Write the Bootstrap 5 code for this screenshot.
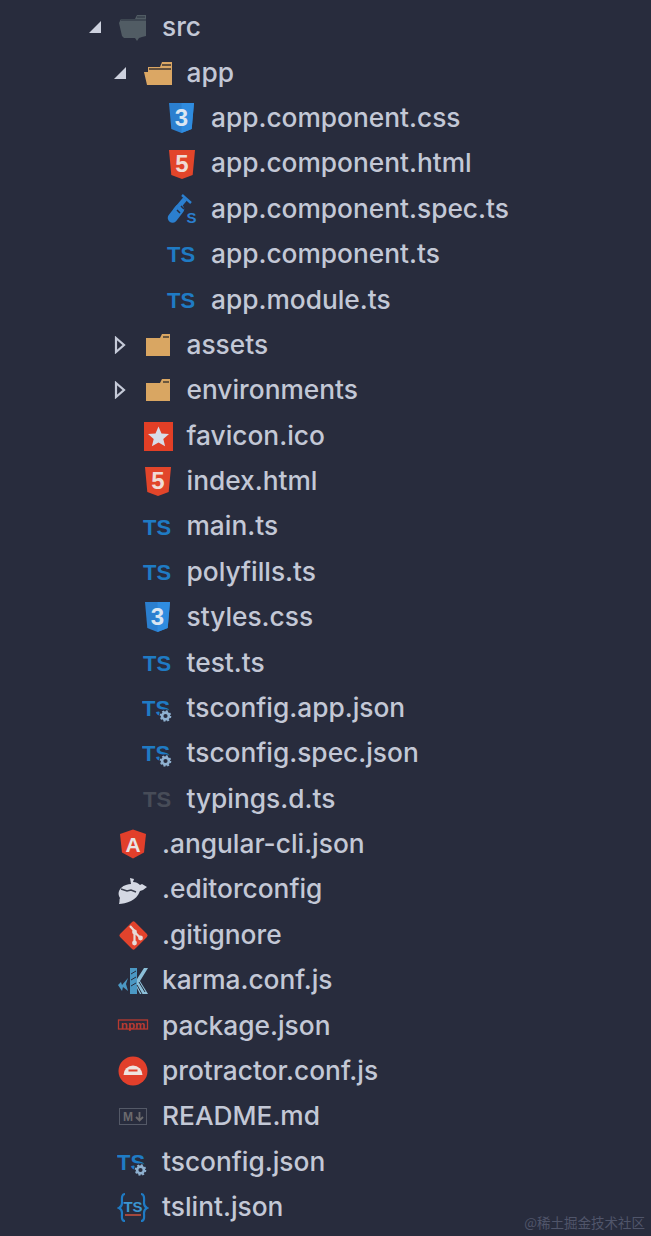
<!DOCTYPE html>
<html lang="en">

<head>
  <meta charset="UTF-8" />
  <meta name="viewport" content="width=device-width, initial-scale=1.0" />
  <title>File tree</title>

  <link href="https://cdn.jsdelivr.net/npm/bootstrap@5.3.0/dist/css/bootstrap.min.css" rel="stylesheet">
  <style>
    html, body {
      height: 100%;
    }

    body {
      background: #282c3d;
      color: #c3c8d6;
      font-family: Inter, "Liberation Sans", "Noto Sans CJK SC", sans-serif;
      overflow: hidden;
    }

    .tree-wrap {
      padding-top: 4.8px;
    }

    .tree-row {
      height: 45.385px;
      font-size: 26.3px;
      font-weight: 500;
      line-height: 1;
      white-space: nowrap;
    }

    .lvl-0 { padding-left: 88px; }
    .lvl-1 { padding-left: 112.5px; }
    .lvl-2 { padding-left: 137px; }

    .arrow-slot {
      width: 29px;
      flex: none;
    }

    .file-icon {
      width: 32px;
      height: 32px;
      flex: none;
      margin-right: 13px;
    }

    symbol text {
      font-family: "Liberation Sans", sans-serif;
      font-weight: 700;
    }

    .water-mark {
      position: absolute;
      right: 6px;
      bottom: 5px;
      font-size: 13.5px;
      line-height: 18px;
      color: #50556a;
      font-family: "Noto Sans CJK SC", sans-serif;
    }
  </style>
</head>

<body class="position-relative">
  <svg width="0" height="0" class="position-absolute">
    <defs>
      <symbol id="i-open" viewBox="0 0 14 14"><path d="M13 1v12H1z" fill="#cdd1de"/></symbol>
      <symbol id="i-closed" viewBox="0 0 14 18"><path d="M3 2l8 7-8 7z" fill="none" stroke="#c5cad8" stroke-width="2.2"/></symbol>

      <symbol id="i-src" viewBox="0 0 32 32"><path d="M4 8h14l2-4h9v21l-4 1-3 1-2 3-2-3H7l-2-2-3-13z" fill="#515c64"/><path d="M4 9h25M20 6h8" stroke="#2b303f" stroke-width="1.200"/></symbol>
      <symbol id="i-app" viewBox="0 0 32 32"><path d="M6 10h12l2-5h10v23H5L2 15h4z" fill="#dba764"/><path d="M7 12h22M20 8h9" stroke="#3c3530" stroke-width="1.400"/></symbol>
      <symbol id="i-folder" viewBox="0 0 32 32"><path d="M4 9h14l2-4h8v22H4z" fill="#d9a662"/><path d="M21 8h6" stroke="#3c3530" stroke-width="1.400"/></symbol>

      <symbol id="i-css" viewBox="0 0 32 32"><path d="M3 1h25l-2.300 26L15.500 31 5.300 27z" fill="#2b7fcf"/><path d="M15.500 1h12.500l-2.300 26-10.200 4z" fill="#2f8ce0"/><text x="15.500" y="24" font-size="24" text-anchor="middle" fill="#dbe6f2">3</text></symbol>
      <symbol id="i-html" viewBox="0 0 32 32"><path d="M3 2h26l-2.300 25L16 31 5.300 27z" fill="#e2452a"/><text x="16" y="24" font-size="24" text-anchor="middle" fill="#f0dcd6">5</text></symbol>
      <symbol id="i-spec" viewBox="0 0 32 32"><path d="M16 2l9 8" stroke="#2b7fcf" stroke-width="2.400"/><path d="M19 6L9 18" stroke="#2b7fcf" stroke-width="5"/><path d="M6.500 25l7-9" stroke="#2b7fcf" stroke-width="9.500" stroke-linecap="round"/><path d="M11 17l3 3M15 13l3 3" stroke="#282c3d" stroke-width="1.500"/><text x="25.500" y="30" font-size="15" text-anchor="middle" fill="#2b7fcf">S</text></symbol>
      <symbol id="i-ts" viewBox="0 0 32 32"><text x="15" y="24" font-size="22" text-anchor="middle" fill="#1f7bc4">TS</text></symbol>
      <symbol id="i-tsgrey" viewBox="0 0 32 32"><text x="15" y="24" font-size="22" text-anchor="middle" fill="#474c58">TS</text></symbol>
      <symbol id="i-tsconf" viewBox="0 0 32 32"><text x="14" y="24" font-size="22" text-anchor="middle" fill="#1f7bc4">TS</text><circle cx="23.500" cy="24" r="6.800" fill="#282c3d"/><circle cx="23.500" cy="24" r="3.400" fill="none" stroke="#8fb1d0" stroke-width="2.600"/><circle cx="23.500" cy="24" r="5" fill="none" stroke="#8fb1d0" stroke-width="1.600" stroke-dasharray="2 1.900"/></symbol>
      <symbol id="i-fav" viewBox="0 0 32 32"><rect x="2" y="2" width="29" height="29" fill="#e23f26"/><path d="M16.500 6.500l3 7 7.500.6-5.700 4.900 1.800 7.300-6.600-3.900-6.600 3.900 1.800-7.300L6 14.100l7.500-.6z" fill="#d7dde8"/></symbol>
      <symbol id="i-ng" viewBox="0 0 32 32"><path d="M16 1.500l13 4.500-2 18.500-11 6-11-6L3 6z" fill="#e23f2b"/><text x="16" y="24" font-size="21" text-anchor="middle" fill="#e8e3e3">A</text></symbol>
      <symbol id="i-editor" viewBox="0 0 32 32"><path d="M13 4l4 1-1 3c3 0 5 1 7 3l2-1 5 3-4 3-3 1c-2 5-5 8-9 10-4 2-9 3-12 3 1-3 0-4 1-6-2-3-2-7 1-10 3-3 7-4 10-4z" fill="#d4d8e3"/><path d="M4 15l6 2 4-1 5 2" fill="none" stroke="#3a3e4d" stroke-width="1.500"/></symbol>
      <symbol id="i-git" viewBox="0 0 32 32"><rect x="6" y="6" width="21" height="21" rx="2" transform="rotate(45 16.500 16.500)" fill="#e2432c"/><path d="M13 7l4.500 5v12M17.500 13l6 6" fill="none" stroke="#e7dcd8" stroke-width="2.200"/><circle cx="17.500" cy="13" r="2.400" fill="#e7dcd8"/><circle cx="17.500" cy="24" r="2.400" fill="#e7dcd8"/><circle cx="23.500" cy="19" r="2.400" fill="#e7dcd8"/></symbol>
      <symbol id="i-karma" viewBox="0 0 32 32"><path d="M13 4h7v11L27 4h4l-8 13 8 13h-8l-3-6v6h-7z" fill="#8cbfd8"/><path d="M13 4h7v26h-7z" fill="#4b98c4"/><path d="M11 14L5 21l-1-3-3 3 4 6 1-4 5 4-2-7z" fill="#4b98c4"/><path d="M20 21l5 9M22 18l6 10M14 10l5-3M14 16l5-3M14 22l5-3" stroke="#282c3d" stroke-width="1"/></symbol>
      <symbol id="i-npm" viewBox="0 0 32 32"><rect x="1.500" y="10" width="29" height="9" fill="none" stroke="#b93a30" stroke-width="1.300"/><text x="16" y="18.500" font-size="11.500" text-anchor="middle" fill="#b93a30">npm</text></symbol>
      <symbol id="i-prot" viewBox="0 0 32 32"><circle cx="16" cy="16" r="14.500" fill="#e23f2b"/><path d="M6.500 20a9.500 9.500 0 0 1 19 0z" fill="#eee3df"/><path d="M11.500 15.500h9" stroke="#e23f2b" stroke-width="2"/></symbol>
      <symbol id="i-md" viewBox="0 0 32 32"><rect x="2.500" y="8.500" width="27" height="16" fill="none" stroke="#545967" stroke-width="1"/><text x="11" y="21" font-size="12" text-anchor="middle" fill="#6b6a6d">M</text><path d="M22.500 12v8M19 17l3.500 3.500L26 17" fill="none" stroke="#6b6a6d" stroke-width="1.800"/></symbol>
      <symbol id="i-tslint" viewBox="0 0 32 32"><text x="16" y="21" font-size="15" text-anchor="middle" fill="#3b94d0">TS</text><path d="M8 24h16" stroke="#c2503f" stroke-width="1.600"/><path d="M8 3C4 3 5 9 5 12s-1 4-3 5c2 1 3 2 3 5s-1 8 3 8M24 3c4 0 3 6 3 9s1 4 3 5c-2 1-3 2-3 5s1 8-3 8" fill="none" stroke="#1f7bc4" stroke-width="2.200"/></symbol>
    </defs>
  </svg>

  <ul class="tree-wrap list-unstyled m-0">
    <li class="tree-row lvl-0 d-flex align-items-center"><svg class="arrow-slot" height="14" viewBox="0 0 29 14" preserveAspectRatio="xMinYMid meet"><use href="#i-open" width="14" height="14"/></svg><svg class="file-icon"><use href="#i-src"/></svg>src</li>
    <li class="tree-row lvl-1 d-flex align-items-center"><svg class="arrow-slot" height="14" viewBox="0 0 29 14" preserveAspectRatio="xMinYMid meet"><use href="#i-open" width="14" height="14"/></svg><svg class="file-icon"><use href="#i-app"/></svg>app</li>
    <li class="tree-row lvl-2 d-flex align-items-center"><span class="arrow-slot"></span><svg class="file-icon"><use href="#i-css"/></svg>app.component.css</li>
    <li class="tree-row lvl-2 d-flex align-items-center"><span class="arrow-slot"></span><svg class="file-icon"><use href="#i-html"/></svg>app.component.html</li>
    <li class="tree-row lvl-2 d-flex align-items-center"><span class="arrow-slot"></span><svg class="file-icon"><use href="#i-spec"/></svg>app.component.spec.ts</li>
    <li class="tree-row lvl-2 d-flex align-items-center"><span class="arrow-slot"></span><svg class="file-icon"><use href="#i-ts"/></svg>app.component.ts</li>
    <li class="tree-row lvl-2 d-flex align-items-center"><span class="arrow-slot"></span><svg class="file-icon"><use href="#i-ts"/></svg>app.module.ts</li>
    <li class="tree-row lvl-1 d-flex align-items-center"><svg class="arrow-slot" height="18" viewBox="0 0 29 18" preserveAspectRatio="xMinYMid meet"><use href="#i-closed" width="14" height="18"/></svg><svg class="file-icon"><use href="#i-folder"/></svg>assets</li>
    <li class="tree-row lvl-1 d-flex align-items-center"><svg class="arrow-slot" height="18" viewBox="0 0 29 18" preserveAspectRatio="xMinYMid meet"><use href="#i-closed" width="14" height="18"/></svg><svg class="file-icon"><use href="#i-folder"/></svg>environments</li>
    <li class="tree-row lvl-1 d-flex align-items-center"><span class="arrow-slot"></span><svg class="file-icon"><use href="#i-fav"/></svg>favicon.ico</li>
    <li class="tree-row lvl-1 d-flex align-items-center"><span class="arrow-slot"></span><svg class="file-icon"><use href="#i-html"/></svg>index.html</li>
    <li class="tree-row lvl-1 d-flex align-items-center"><span class="arrow-slot"></span><svg class="file-icon"><use href="#i-ts"/></svg>main.ts</li>
    <li class="tree-row lvl-1 d-flex align-items-center"><span class="arrow-slot"></span><svg class="file-icon"><use href="#i-ts"/></svg>polyfills.ts</li>
    <li class="tree-row lvl-1 d-flex align-items-center"><span class="arrow-slot"></span><svg class="file-icon"><use href="#i-css"/></svg>styles.css</li>
    <li class="tree-row lvl-1 d-flex align-items-center"><span class="arrow-slot"></span><svg class="file-icon"><use href="#i-ts"/></svg>test.ts</li>
    <li class="tree-row lvl-1 d-flex align-items-center"><span class="arrow-slot"></span><svg class="file-icon"><use href="#i-tsconf"/></svg>tsconfig.app.json</li>
    <li class="tree-row lvl-1 d-flex align-items-center"><span class="arrow-slot"></span><svg class="file-icon"><use href="#i-tsconf"/></svg>tsconfig.spec.json</li>
    <li class="tree-row lvl-1 d-flex align-items-center"><span class="arrow-slot"></span><svg class="file-icon"><use href="#i-tsgrey"/></svg>typings.d.ts</li>
    <li class="tree-row lvl-0 d-flex align-items-center"><span class="arrow-slot"></span><svg class="file-icon"><use href="#i-ng"/></svg>.angular-cli.json</li>
    <li class="tree-row lvl-0 d-flex align-items-center"><span class="arrow-slot"></span><svg class="file-icon"><use href="#i-editor"/></svg>.editorconfig</li>
    <li class="tree-row lvl-0 d-flex align-items-center"><span class="arrow-slot"></span><svg class="file-icon"><use href="#i-git"/></svg>.gitignore</li>
    <li class="tree-row lvl-0 d-flex align-items-center"><span class="arrow-slot"></span><svg class="file-icon"><use href="#i-karma"/></svg>karma.conf.js</li>
    <li class="tree-row lvl-0 d-flex align-items-center"><span class="arrow-slot"></span><svg class="file-icon"><use href="#i-npm"/></svg>package.json</li>
    <li class="tree-row lvl-0 d-flex align-items-center"><span class="arrow-slot"></span><svg class="file-icon"><use href="#i-prot"/></svg>protractor.conf.js</li>
    <li class="tree-row lvl-0 d-flex align-items-center"><span class="arrow-slot"></span><svg class="file-icon"><use href="#i-md"/></svg>README.md</li>
    <li class="tree-row lvl-0 d-flex align-items-center"><span class="arrow-slot"></span><svg class="file-icon"><use href="#i-tsconf"/></svg>tsconfig.json</li>
    <li class="tree-row lvl-0 d-flex align-items-center"><span class="arrow-slot"></span><svg class="file-icon"><use href="#i-tslint"/></svg>tslint.json</li>
  </ul>

  <div class="water-mark">@稀土掘金技术社区</div>

  <script src="https://cdn.jsdelivr.net/npm/bootstrap@5.3.0/dist/js/bootstrap.bundle.min.js"></script>
</body>

</html>
